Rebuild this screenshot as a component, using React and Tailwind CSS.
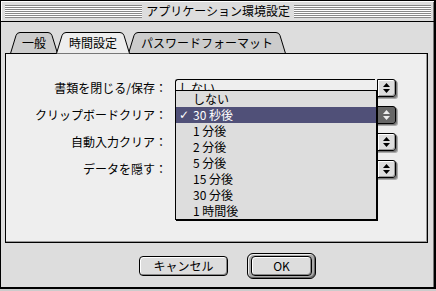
import React from 'react';

const tabPath = (w) =>
  `M0.5 21.5 L6 3.5 Q7 0.5 10 0.5 L${w - 10} 0.5 Q${w - 7} 0.5 ${w - 6} 3.5 L${w - 0.5} 21.5`;

const Tab = ({ label, w, active, className }) => (
  <div className={`relative flex h-[21px] items-center justify-center ${active ? 'z-10 h-[22px]' : 'z-0'} ${className}`}>
    <svg className="absolute inset-0" width={w} height={22} viewBox={`0 0 ${w} 22`}>
      <path d={tabPath(w)} fill={active ? '#eeeeee' : '#cccccc'} stroke="#000" strokeWidth="1" />
    </svg>
    <span className={`relative text-[12px] leading-none ${active ? '-mt-px' : ''}`}>{label}</span>
  </div>
);

const Arrows = ({ color }) => (
  <svg width="7" height="10" viewBox="0 0 7 10">
    <path d="M3.5 0 L7 4 L0 4 Z" fill={color} />
    <path d="M0 6 L7 6 L3.5 10 Z" fill={color} />
  </svg>
);

const Popup = ({ text, pressed }) => (
  <div className="flex h-[18px] w-[221px] shadow-[1px_1px_0_#777,2px_2px_0_#aaa] rounded-[3px]">
    <div className="flex flex-1 items-center rounded-l-[3px] border border-r-0 border-black bg-[#eeeeee] pl-[3px] text-[12px] leading-none">
      {text}
    </div>
    <div className="w-[2px] bg-[#eeeeee]" />
    <div
      className={`flex w-[19px] items-center justify-center rounded-r-[3px] border border-black ${
        pressed ? 'bg-[#666666]' : 'bg-[#dddddd] shadow-[inset_1px_1px_0_#fff,inset_-1px_-1px_0_#999]'
      }`}
    >
      <Arrows color={pressed ? '#eeeeee' : '#000'} />
    </div>
  </div>
);

// only the first popup's value peeks out above the open menu
const rows = [
  { label: '書類を閉じる/保存：', value: 'しない' },
  { label: 'クリップボードクリア：', value: '', pressed: true },
  { label: '自動入力クリア：', value: '' },
  { label: 'データを隠す：', value: '' },
];

const items = ['しない', '30 秒後', '1 分後', '2 分後', '5 分後', '15 分後', '30 分後', '1 時間後'];

export default function App() {
  return (
    <div className="relative h-[291px] w-[436px] bg-[#cccccc] text-black font-['Noto_Sans_CJK_JP','Noto_Sans',sans-serif]">
      <div className="flex h-[289px] w-[436px] flex-col border-l border-t border-black border-r-2 border-b-2 bg-[#dddddd] shadow-[inset_-1px_0_0_#777]">
        {/* title bar */}
        <div className="flex h-[20px] items-center gap-[3px] pl-[4px] pr-[3px] shadow-[inset_1px_1px_0_#fff]">
          <div className="h-[13px] flex-1 bg-[repeating-linear-gradient(to_bottom,#888888_0px,#888888_1px,#ffffff_1px,#ffffff_2px)]" />
          <span className="px-[1px] text-[12px] leading-none">アプリケーション環境設定</span>
          <div className="h-[13px] flex-1 bg-[repeating-linear-gradient(to_bottom,#888888_0px,#888888_1px,#ffffff_1px,#ffffff_2px)]" />
        </div>
        <div className="h-px bg-black" />

        {/* tabs */}
        <div className="ml-[9px] mt-[10px] -mb-px flex">
          <Tab label="一般" w={48} className="w-[48px]" />
          <Tab label="時間設定" w={74} active className="-ml-[2px] w-[74px]" />
          <Tab label="パスワードフォーマット" w={158} className="-ml-[2px] w-[158px]" />
        </div>

        {/* panel */}
        <div className="relative z-[5] ml-[4px] flex h-[190px] w-[423px] flex-col gap-[9px] border border-black bg-[#eeeeee] pt-[25px] shadow-[inset_-1px_-1px_0_#999]">
          {rows.map((r) => (
            <div key={r.label} className="flex items-center">
              <div className="w-[161px] text-right text-[12px] leading-none">{r.label}</div>
              <div className="ml-[8px]">
                <Popup text={r.value} pressed={r.pressed} />
              </div>
            </div>
          ))}
        </div>

        {/* buttons */}
        <div className="mt-[10px] flex h-[26px] items-center pl-[138px]">
          <button className="flex h-[20px] w-[89px] items-center justify-center rounded-[4px] border border-black bg-[#dddddd] text-[12px] leading-none shadow-[inset_1px_1px_0_#fff,inset_-1px_-1px_0_#888]">
            キャンセル
          </button>
          <div className="ml-[19px] flex h-[26px] w-[69px] items-center justify-center rounded-[6px] border border-black bg-[#aaaaaa] shadow-[inset_1px_1px_0_#eee,inset_-1px_-1px_0_#666]">
            <button className="flex h-[20px] w-[61px] items-center justify-center rounded-[4px] border border-black bg-[#dddddd] text-[12px] leading-none shadow-[inset_1px_1px_0_#fff,inset_-1px_-1px_0_#888]">
              OK
            </button>
          </div>
        </div>
      </div>

      {/* open popup menu */}
      <div className="absolute left-[175px] top-[90px] z-20 w-[202px] border border-black bg-[#dddddd] shadow-[1px_1px_0_#000]">
        {items.map((it, i) => (
          <div
            key={it}
            className={`relative flex h-[16px] items-center pl-[17px] text-[12px] leading-none ${
              i === 1 ? 'bg-[#505078] text-white' : ''
            }`}
          >
            {i === 1 && <span className="absolute left-[3px] font-['DejaVu_Sans',sans-serif] text-[12px]">✓</span>}
            {it}
          </div>
        ))}
      </div>
    </div>
  );
}
